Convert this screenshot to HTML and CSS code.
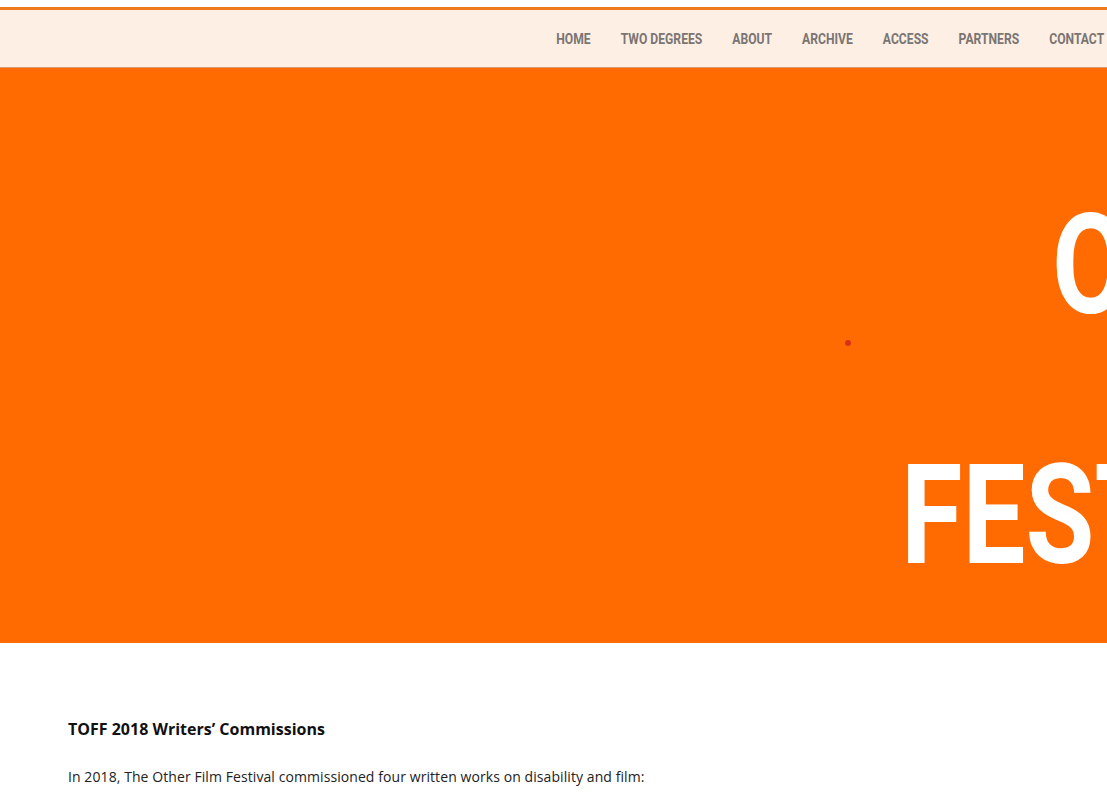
FILE: index.html
```html
<!DOCTYPE html>
<html>
<head>
<meta charset="utf-8">
<link rel="stylesheet" href="styles.css">
</head>
<body>
<header class="site-header">
  <nav class="nav">
    <a class="nav-item" href="#">HOME</a>
    <a class="nav-item" href="#">TWO DEGREES</a>
    <a class="nav-item" href="#">ABOUT</a>
    <a class="nav-item" href="#">ARCHIVE</a>
    <a class="nav-item" href="#">ACCESS</a>
    <a class="nav-item" href="#">PARTNERS</a>
    <a class="nav-item" href="#">CONTACT</a>
  </nav>
</header>
<section class="hero">
  <div class="hero-line hero-line-1">OTHER</div>
  <div class="hero-line hero-line-2">FESTIVAL</div>
  <span class="hero-dot"></span>
</section>
<main class="content">
  <h2 class="title">TOFF 2018 Writers’ Commissions</h2>
  <p class="lead">In 2018, The Other Film Festival commissioned four written works on disability and film:</p>
</main>
</body>
</html>
```
FILE: styles.css
```css
html, body {
  margin: 0;
  padding: 0;
  background: #ffffff;
  overflow: hidden;
}
body {
  padding-top: 7px;
  width: 1107px;
  height: 793px;
}
.site-header {
  border-top: 3px solid #ef7a1c;
  border-bottom: 1px solid #d99a70;
  background: #fdefe4;
  height: 57px;
  display: flex;
  justify-content: flex-end;
  align-items: center;
}
.nav {
  display: flex;
  gap: 37px;
  padding-right: 4px;
  margin-top: 0;
  transform: scaleX(0.81);
  transform-origin: right center;
}
.nav-item {
  font-family: "Roboto", sans-serif;
  font-weight: bold;
  font-size: 15px;
  color: #7a7573;
  text-decoration: none;
}
.hero {
  position: relative;
  height: 575px;
  background: #ff6b00;
  overflow: hidden;
}
.hero-line {
  position: absolute;
  font-family: "Roboto", sans-serif;
  font-weight: bold;
  font-size: 140px;
  line-height: 1;
  color: #ffffff;
  white-space: nowrap;
  transform: scaleX(0.8);
  transform-origin: left top;
}
.hero-line-1 {
  left: 1052px;
  top: 127px;
}
.hero-line-2 {
  left: 901px;
  top: 377px;
}
.hero-dot {
  position: absolute;
  left: 845px;
  top: 272px;
  width: 6px;
  height: 6px;
  border-radius: 50%;
  background: #d9301c;
}
.content {
  padding: 75px 68px 0;
}
.title {
  margin: 0 0 27px;
  font-family: "Open Sans", sans-serif;
  font-weight: bold;
  font-size: 16px;
  color: #111;
}
.lead {
  margin: 0;
  font-family: "Open Sans", sans-serif;
  font-size: 14px;
  letter-spacing: 0.08px;
  color: #222;
}
```
